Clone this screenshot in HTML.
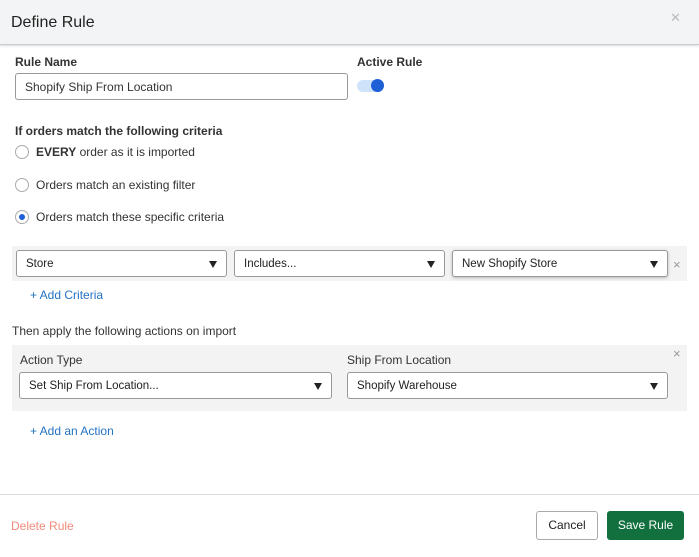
<!DOCTYPE html>
<html><head><style>
*{box-sizing:border-box;margin:0;padding:0}
body{width:699px;height:557px;background:#fff;font-family:"Liberation Sans",sans-serif;color:#333;position:relative;overflow:hidden;font-size:12px}
.a{position:absolute;white-space:nowrap}
.hdr{left:0;top:0;width:699px;height:45px;background:#f3f4f5;border-bottom:1px solid #ccc;box-shadow:0 1px 2px rgba(0,0,0,.15)}
.lbl{font-weight:bold;color:#333;font-size:12px}
.inp{border:1px solid #999;border-radius:3px;background:#fff;height:27px;line-height:27px;padding-left:9px;font-size:12px;color:#333}
.sel{border:1px solid #999;border-radius:3px;background:#fff;height:27px;line-height:27px;padding-left:9px;font-size:11.5px;color:#222}
.sel:after{content:"";position:absolute;right:9px;top:10px;border-left:4px solid transparent;border-right:4px solid transparent;border-top:7px solid #222}
.radio{width:14px;height:14px;border:1px solid #aaa;border-radius:50%;background:#fff}
.blue{color:#2473c4;font-size:12px}
.x{color:#999;font-size:13px}
</style></head><body>
<div class="a hdr"></div>
<div class="a" style="left:11px;top:14px;font-size:16px;color:#222">Define Rule</div>
<div class="a x" style="left:670px;top:10px;color:#bbb">✕</div>

<div class="a lbl" style="left:15px;top:55px">Rule Name</div>
<div class="a inp" style="left:15px;top:73px;width:333px">Shopify Ship From Location</div>
<div class="a lbl" style="left:357px;top:55px">Active Rule</div>
<div class="a" style="left:357px;top:80px;width:27px;height:12px;border-radius:6px;background:#cfe3fb"></div>
<div class="a" style="left:371px;top:79px;width:13px;height:13px;border-radius:50%;background:#1f5fd6"></div>

<div class="a lbl" style="left:15px;top:124px">If orders match the following criteria</div>
<div class="a radio" style="left:15px;top:145px"></div>
<div class="a" style="left:36px;top:145px"><b>EVERY</b> order as it is imported</div>
<div class="a radio" style="left:15px;top:178px"></div>
<div class="a" style="left:36px;top:178px">Orders match an existing filter</div>
<div class="a radio" style="left:15px;top:210px"></div>
<div class="a" style="left:19px;top:214px;width:6px;height:6px;border-radius:50%;background:#1f5fd6"></div>
<div class="a" style="left:36px;top:210px">Orders match these specific criteria</div>

<div class="a" style="left:12px;top:246px;width:675px;height:35px;background:#f3f3f3"></div>
<div class="a sel" style="left:16px;top:250px;width:211px">Store</div>
<div class="a sel" style="left:234px;top:250px;width:211px">Includes...</div>
<div class="a sel" style="left:452px;top:250px;width:216px;box-shadow:0 1px 3px rgba(0,0,0,.25)">New Shopify Store</div>
<div class="a x" style="left:673px;top:257px">×</div>
<div class="a blue" style="left:30px;top:288px">+ Add Criteria</div>

<div class="a" style="left:12px;top:324px;font-size:12px">Then apply the following actions on import</div>
<div class="a" style="left:12px;top:345px;width:675px;height:66px;background:#f3f3f3"></div>
<div class="a" style="left:20px;top:353px">Action Type</div>
<div class="a" style="left:347px;top:353px">Ship From Location</div>
<div class="a x" style="left:673px;top:346px">×</div>
<div class="a sel" style="left:19px;top:372px;width:313px">Set Ship From Location...</div>
<div class="a sel" style="left:347px;top:372px;width:321px">Shopify Warehouse</div>
<div class="a blue" style="left:30px;top:424px">+ Add an Action</div>

<div class="a" style="left:0;top:494px;width:699px;height:1px;background:#ddd"></div>
<div class="a" style="left:11px;top:519px;color:#f08a7a">Delete Rule</div>
<div class="a" style="left:536px;top:511px;width:62px;height:29px;border:1px solid #aaa;border-radius:3px;text-align:center;line-height:27px;color:#222">Cancel</div>
<div class="a" style="left:607px;top:511px;width:77px;height:29px;background:#12703f;border-radius:3px;text-align:center;line-height:29px;color:#fff">Save Rule</div>
</body></html>
